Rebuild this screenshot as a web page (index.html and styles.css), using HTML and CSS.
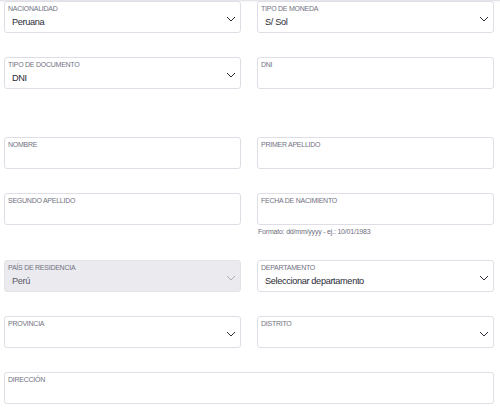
FILE: index.html
```html
<!DOCTYPE html>
<html lang="es">
<head>
<meta charset="utf-8">
<link rel="stylesheet" href="styles.css">
</head>
<body>
<div class="topline"></div>
<form class="form">
  <div class="field">
    <div class="box select">
      <span class="label">NACIONALIDAD</span>
      <span class="value">Peruana</span>
      <svg class="chev" viewBox="0 0 10 6"><path d="M1 1l4 4 4-4"/></svg>
    </div>
  </div>
  <div class="field">
    <div class="box select">
      <span class="label">TIPO DE MONEDA</span>
      <span class="value">S/ Sol</span>
      <svg class="chev" viewBox="0 0 10 6"><path d="M1 1l4 4 4-4"/></svg>
    </div>
  </div>
  <div class="field tall">
    <div class="box select">
      <span class="label">TIPO DE DOCUMENTO</span>
      <span class="value">DNI</span>
      <svg class="chev" viewBox="0 0 10 6"><path d="M1 1l4 4 4-4"/></svg>
    </div>
  </div>
  <div class="field tall">
    <div class="box">
      <span class="label">DNI</span>
    </div>
  </div>
  <div class="field">
    <div class="box">
      <span class="label">NOMBRE</span>
    </div>
  </div>
  <div class="field">
    <div class="box">
      <span class="label">PRIMER APELLIDO</span>
    </div>
  </div>
  <div class="field helped">
    <div class="box">
      <span class="label">SEGUNDO APELLIDO</span>
    </div>
  </div>
  <div class="field helped">
    <div class="box">
      <span class="label">FECHA DE NACIMIENTO</span>
    </div>
    <div class="help">Formato: dd/mm/yyyy - ej.: 10/01/1983</div>
  </div>
  <div class="field">
    <div class="box select disabled">
      <span class="label">PAÍS DE RESIDENCIA</span>
      <span class="value">Perú</span>
      <svg class="chev" viewBox="0 0 10 6"><path d="M1 1l4 4 4-4"/></svg>
    </div>
  </div>
  <div class="field">
    <div class="box select">
      <span class="label">DEPARTAMENTO</span>
      <span class="value">Seleccionar departamento</span>
      <svg class="chev" viewBox="0 0 10 6"><path d="M1 1l4 4 4-4"/></svg>
    </div>
  </div>
  <div class="field">
    <div class="box select">
      <span class="label">PROVINCIA</span>
      <span class="value"></span>
      <svg class="chev" viewBox="0 0 10 6"><path d="M1 1l4 4 4-4"/></svg>
    </div>
  </div>
  <div class="field">
    <div class="box select">
      <span class="label">DISTRITO</span>
      <span class="value"></span>
      <svg class="chev" viewBox="0 0 10 6"><path d="M1 1l4 4 4-4"/></svg>
    </div>
  </div>
  <div class="field full">
    <div class="box">
      <span class="label">DIRECCIÓN</span>
    </div>
  </div>
</form>
</body>
</html>
```
FILE: styles.css
```css
* { box-sizing: border-box; }
html, body { margin: 0; padding: 0; background: #fff; overflow: hidden; }
body {
  font-family: "Liberation Sans", Arial, sans-serif;
  color: #23232f;
  position: relative;
}
.topline {
  height: 1px;
  background: #e4e4ea;
  box-shadow: 0 1px 2px rgba(40, 40, 70, 0.08);
}
.form {
  display: grid;
  grid-template-columns: 237px 237px;
  column-gap: 16px;
  padding: 0 6px 0 4px;
}
.field {
  padding-bottom: 24px;
}
.field.tall { padding-bottom: 48px; }
.field.helped { padding-bottom: 35px; }
.field.helped:has(.help) { padding-bottom: 24px; }
.field.full { grid-column: 1 / -1; }
.box {
  position: relative;
  height: 32px;
  border: 1px solid #dfdee7;
  border-radius: 3px;
  background: #fff;
  padding: 2px 4px 0 3px;
  display: flex;
  flex-direction: column;
}
.box.disabled {
  background: #eaeaef;
  border-color: #e2e2e8;
}
.label {
  font-size: 7px;
  line-height: 9px;
  color: #727282;
  letter-spacing: -0.25px;
}
.value {
  font-size: 9.2px;
  line-height: 12px;
  margin-top: 3px;
  padding-left: 4px;
  color: #2a2a36;
  letter-spacing: -0.35px;
}
.disabled .value { color: #5a5a66; }
.chev {
  position: absolute;
  right: 4px;
  top: 14px;
  width: 10px;
  height: 6px;
  fill: none;
  stroke: #2f2f3a;
  stroke-width: 1;
}
.disabled .chev { stroke: #b0b0ba; }
.help {
  font-size: 7px;
  line-height: 9px;
  color: #6e6e7e;
  margin-top: 2px;
  padding-left: 1px;
  letter-spacing: -0.2px;
}
```
